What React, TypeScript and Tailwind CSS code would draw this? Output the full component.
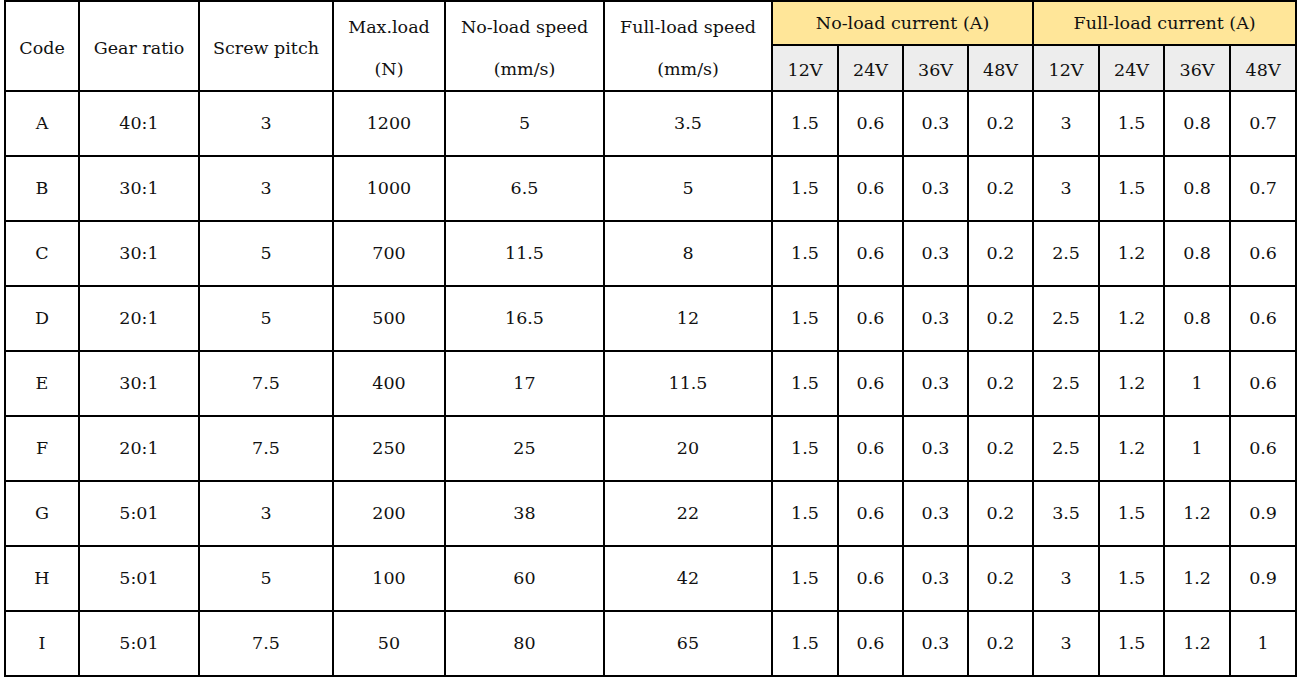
const rows: [string, string, string, string, string, string, string[], string[]][] = [
  ["A", "40:1", "3", "1200", "5", "3.5", ["1.5", "0.6", "0.3", "0.2"], ["3", "1.5", "0.8", "0.7"]],
  ["B", "30:1", "3", "1000", "6.5", "5", ["1.5", "0.6", "0.3", "0.2"], ["3", "1.5", "0.8", "0.7"]],
  ["C", "30:1", "5", "700", "11.5", "8", ["1.5", "0.6", "0.3", "0.2"], ["2.5", "1.2", "0.8", "0.6"]],
  ["D", "20:1", "5", "500", "16.5", "12", ["1.5", "0.6", "0.3", "0.2"], ["2.5", "1.2", "0.8", "0.6"]],
  ["E", "30:1", "7.5", "400", "17", "11.5", ["1.5", "0.6", "0.3", "0.2"], ["2.5", "1.2", "1", "0.6"]],
  ["F", "20:1", "7.5", "250", "25", "20", ["1.5", "0.6", "0.3", "0.2"], ["2.5", "1.2", "1", "0.6"]],
  ["G", "5:01", "3", "200", "38", "22", ["1.5", "0.6", "0.3", "0.2"], ["3.5", "1.5", "1.2", "0.9"]],
  ["H", "5:01", "5", "100", "60", "42", ["1.5", "0.6", "0.3", "0.2"], ["3", "1.5", "1.2", "0.9"]],
  ["I", "5:01", "7.5", "50", "80", "65", ["1.5", "0.6", "0.3", "0.2"], ["3", "1.5", "1.2", "1"]],
];

// column widths measured between grid lines
const widths = [74, 120, 134, 112, 159, 168, 66, 65, 65, 65, 66, 65, 66, 66];
const volts = ["12V", "24V", "36V", "48V"];

const cell = "border-2 border-black text-center align-middle p-0";

export default function App() {
  return (
    <div className="min-h-screen bg-white pl-[4px] text-[17.5px] text-[#111] [font-family:'DejaVu_Serif',serif]">
      <table className="table-fixed border-collapse w-[1293px]">
        <colgroup>
          {widths.map((w, i) => (
            <col key={i} style={{ width: w }} />
          ))}
        </colgroup>
        <thead>
          <tr className="h-[42px]">
            <th rowSpan={2} className={`${cell} font-normal pt-1`}>Code</th>
            <th rowSpan={2} className={`${cell} font-normal pt-1`}>Gear ratio</th>
            <th rowSpan={2} className={`${cell} font-normal pt-1`}>Screw pitch</th>
            <th rowSpan={2} className={`${cell} font-normal leading-[42px] pt-1`}>
              Max.load<br />(N)
            </th>
            <th rowSpan={2} className={`${cell} font-normal leading-[42px] pt-1`}>
              No-load speed<br />(mm/s)
            </th>
            <th rowSpan={2} className={`${cell} font-normal leading-[42px] pt-1`}>
              Full-load speed<br />(mm/s)
            </th>
            <th colSpan={4} className={`${cell} font-normal bg-[#ffe699]`}>No-load current (A)</th>
            <th colSpan={4} className={`${cell} font-normal bg-[#ffe699]`}>Full-load current (A)</th>
          </tr>
          <tr className="h-[44px]">
            {[...volts, ...volts].map((v, i) => (
              <th key={i} className={`${cell} font-normal bg-[#ededed] pt-1`}>{v}</th>
            ))}
          </tr>
        </thead>
        <tbody>
          {rows.map((r) => (
            <tr key={r[0]} className="h-[65px]">
              {r.slice(0, 6).map((v, i) => (
                <td key={i} className={cell}>{v as string}</td>
              ))}
              {r[6].map((v, i) => (
                <td key={`n${i}`} className={cell}>{v}</td>
              ))}
              {r[7].map((v, i) => (
                <td key={`f${i}`} className={cell}>{v}</td>
              ))}
            </tr>
          ))}
        </tbody>
      </table>
    </div>
  );
}
